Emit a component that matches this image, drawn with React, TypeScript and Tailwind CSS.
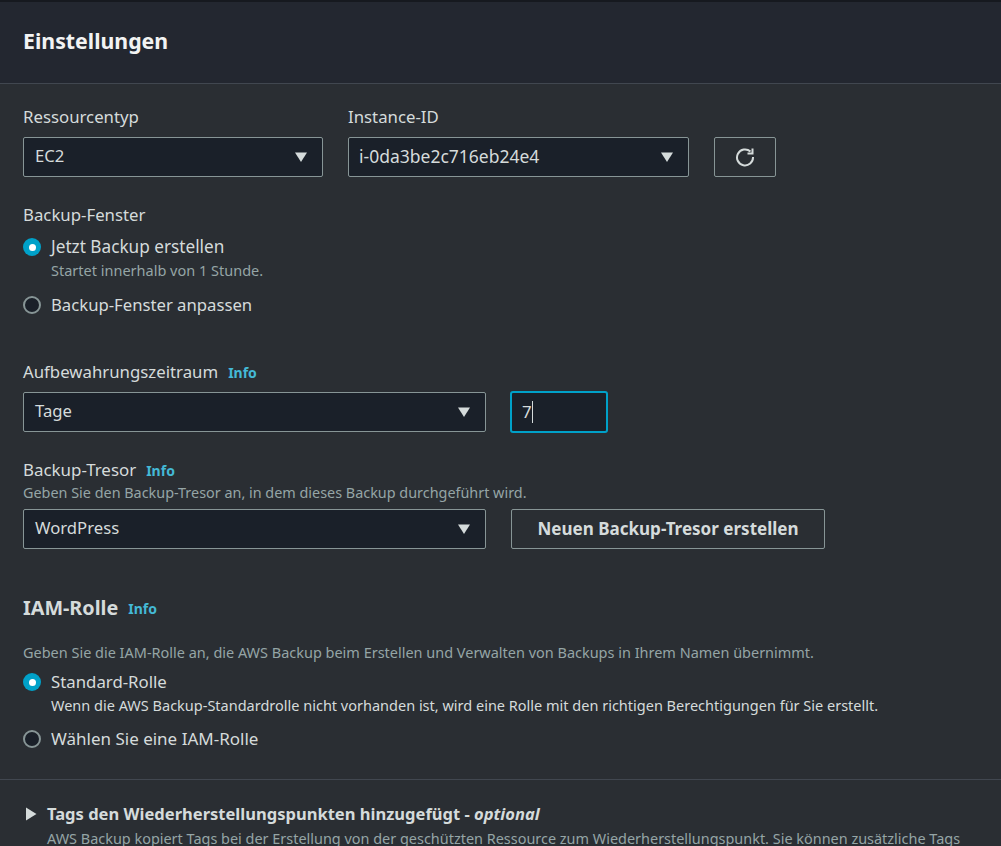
const FONT = "font-['Noto_Sans','Open_Sans',sans-serif]";

function Caret() {
  return (
    <svg width="14" height="12" viewBox="0 0 14 12" className="shrink-0">
      <path d="M1 1.5h12L7 11z" fill="#d5dbdb" />
    </svg>
  );
}

function Select({ value, className }: { value: string; className: string }) {
  return (
    <div className={`h-10 flex items-center justify-between pl-[11px] pr-[14px] rounded-[2px] border border-[#879596] bg-[#1a2029] text-[#d5dbdb] text-[16.7px] ${className}`}>
      <span className="relative top-[-1px]">{value}</span>
      <Caret />
    </div>
  );
}

function Radio({ checked }: { checked?: boolean }) {
  return checked ? (
    <span className="w-[18px] h-[18px] rounded-full bg-[#00a1c9] flex items-center justify-center shrink-0">
      <span className="w-[7px] h-[7px] rounded-full bg-white" />
    </span>
  ) : (
    <span className="w-[18px] h-[18px] rounded-full border-2 border-[#879596] bg-[#1a2029] shrink-0" />
  );
}

function Info() {
  return <span className="text-[14px] font-bold text-[#44b9d6]">Info</span>;
}

export default function App() {
  return (
    <div className={`w-[1001px] h-[846px] overflow-hidden bg-[#2a2e33] ${FONT}`}>
      <div className="h-[2px] bg-[#16191f]" />

      <div className="h-[82px] flex items-center px-[23px] bg-[#232730] border-b border-[#414750]">
        <h2 className="text-[21.3px] font-bold text-[#f2f3f3] relative top-[-2px]">Einstellungen</h2>
      </div>

      <div className="px-[23px] pt-[21px]">
        <div className="flex items-end">
          <div className="w-[300px]">
            <div className="h-[24px] leading-[24px] text-[16.8px] text-[#d5dbdb] mb-[8px]">Ressourcentyp</div>
            <Select value="EC2" className="w-full" />
          </div>
          <div className="w-[341px] ml-[25px]">
            <div className="h-[24px] leading-[24px] text-[16.8px] text-[#d5dbdb] mb-[8px]">Instance-ID</div>
            <div className="h-10 flex items-center justify-between pl-[10px] pr-[14px] rounded-[2px] border border-[#879596] bg-[#1a2029] text-[#d5dbdb] text-[17.5px]">
              <span className="relative top-[-1px]">i-0da3be2c716eb24e4</span>
              <Caret />
            </div>
          </div>
          <div className="ml-[25px] w-[62px] h-10 flex items-center justify-center rounded-[2px] border border-[#879596]">
            <svg width="20" height="20" viewBox="0 0 20 20" fill="none" stroke="#d5dbdb" strokeWidth="2">
              <path d="M15.5 4.6A8 8 0 1 0 18 10" />
              <path d="M17.5 1.5v5h-5" />
            </svg>
          </div>
        </div>

        <div className="mt-[26px] h-[24px] leading-[24px] text-[16.8px] text-[#d5dbdb]">Backup-Fenster</div>
        <div className="mt-[8px] flex items-center gap-[10px] h-[24px] text-[17.2px] text-[#d5dbdb]">
          <Radio checked />
          <span>Jetzt Backup erstellen</span>
        </div>
        <div className="ml-[28px] h-[22px] leading-[22px] text-[14.5px] text-[#95a5a6]">Startet innerhalb von 1 Stunde.</div>
        <div className="mt-[12px] flex items-center gap-[10px] h-[24px] text-[16.7px] text-[#d5dbdb]">
          <Radio />
          <span>Backup-Fenster anpassen</span>
        </div>

        <div className="mt-[43px] flex items-center gap-[10px] h-[24px] text-[16.8px] text-[#d5dbdb]">
          <span>Aufbewahrungszeitraum</span>
          <Info />
        </div>
        <div className="mt-[8px] flex items-center h-10">
          <Select value="Tage" className="w-[463px]" />
          <div className="ml-[24px] w-[98px] h-[42px] flex items-center pl-[10px] rounded-[3px] border-2 border-[#00a1c9] bg-[#1a2029] text-[16.8px] text-[#d5dbdb]">
            7<span className="w-px h-[22px] bg-[#d5dbdb]" />
          </div>
        </div>

        <div className="mt-[26px] flex items-center gap-[10px] h-[24px] text-[16.9px] text-[#d5dbdb]">
          <span>Backup-Tresor</span>
          <Info />
        </div>
        <div className="h-[22px] leading-[22px] text-[14.4px] text-[#95a5a6]">Geben Sie den Backup-Tresor an, in dem dieses Backup durchgeführt wird.</div>
        <div className="mt-[5px] flex items-center h-10">
          <Select value="WordPress" className="w-[463px]" />
          <div className="ml-[25px] w-[314px] h-10 flex items-center justify-center rounded-[2px] border border-[#879596] text-[17.05px] font-bold text-[#d5dbdb]">
            Neuen Backup-Tresor erstellen
          </div>
        </div>

        <div className="mt-[46px] flex items-center gap-[10px] h-[26px]">
          <span className="text-[19.8px] font-bold text-[#d5dbdb]">IAM-Rolle</span>
          <Info />
        </div>
        <div className="mt-[21px] h-[22px] leading-[22px] text-[14.47px] text-[#95a5a6]">Geben Sie die IAM-Rolle an, die AWS Backup beim Erstellen und Verwalten von Backups in Ihrem Namen übernimmt.</div>
        <div className="mt-[6px] flex items-center gap-[10px] h-[24px] text-[16.8px] text-[#d5dbdb]">
          <Radio checked />
          <span>Standard-Rolle</span>
        </div>
        <div className="ml-[28px] h-[22px] leading-[22px] text-[14.5px] text-[#d5dbdb]">Wenn die AWS Backup-Standardrolle nicht vorhanden ist, wird eine Rolle mit den richtigen Berechtigungen für Sie erstellt.</div>
        <div className="mt-[11px] flex items-center gap-[10px] h-[24px] text-[17px] text-[#d5dbdb]">
          <Radio />
          <span>Wählen Sie eine IAM-Rolle</span>
        </div>
      </div>

      <div className="mt-[28px] border-t border-[#414750]" />

      <div className="pl-[25px] pt-[22px]">
        <div className="flex items-center gap-[10px] h-[24px] text-[16.55px] font-bold text-[#d5dbdb]">
          <svg width="12" height="14" viewBox="0 0 12 14" className="shrink-0">
            <path d="M1 0.5l10.5 6.5-10.5 6.5z" fill="#d5dbdb" />
          </svg>
          <span>Tags den Wiederherstellungspunkten hinzugefügt - <i>optional</i></span>
        </div>
        <div className="ml-[22px] mt-[2px] whitespace-nowrap leading-[22px] text-[14.45px] text-[#95a5a6]">AWS Backup kopiert Tags bei der Erstellung von der geschützten Ressource zum Wiederherstellungspunkt. Sie können zusätzliche Tags</div>
      </div>
    </div>
  );
}
